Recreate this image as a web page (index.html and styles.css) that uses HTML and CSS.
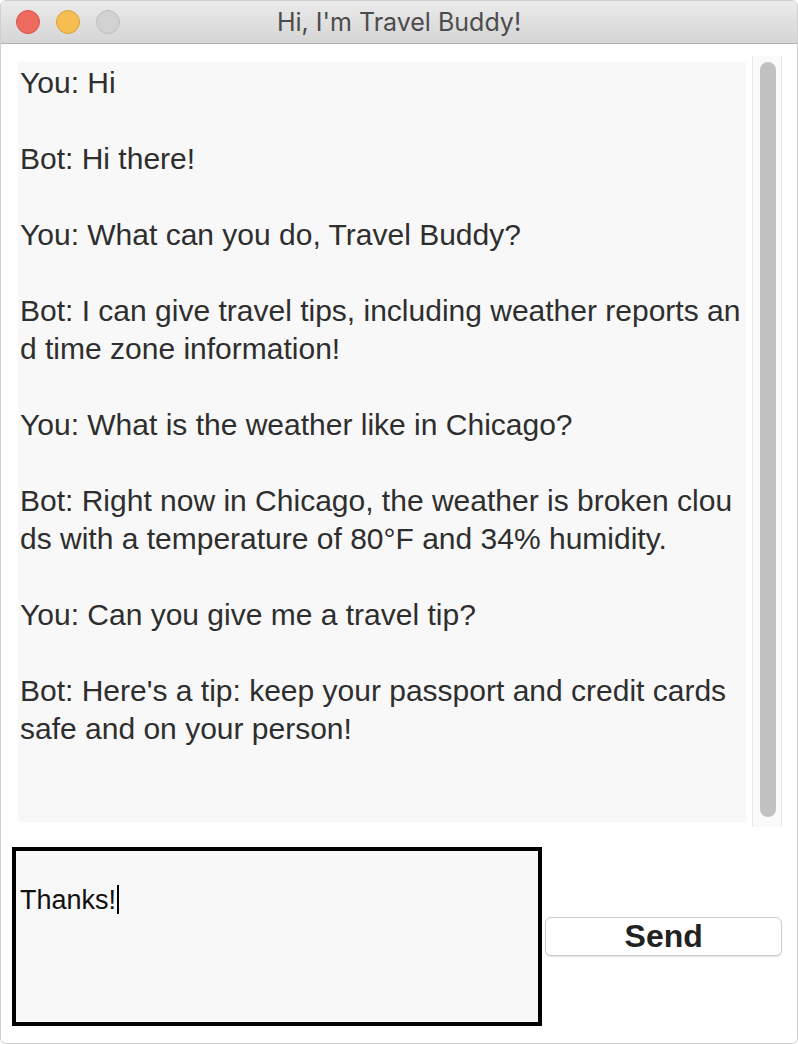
FILE: index.html
```html
<!DOCTYPE html>
<html>
<head>
<meta charset="utf-8">
<link rel="stylesheet" href="styles.css">
</head>
<body>
<div class="window">
  <div class="titlebar">
    <div class="lights">
      <span class="light red"></span>
      <span class="light yellow"></span>
      <span class="light gray"></span>
    </div>
    <div class="title">Hi, I'm Travel Buddy!</div>
  </div>
  <div class="content">
    <div class="chat-row">
      <div class="chat">
        <div class="line">You: Hi</div>
        <div class="line"></div>
        <div class="line">Bot: Hi there!</div>
        <div class="line"></div>
        <div class="line">You: What can you do, Travel Buddy?</div>
        <div class="line"></div>
        <div class="line">Bot: I can give travel tips, including weather reports an</div>
        <div class="line">d time zone information!</div>
        <div class="line"></div>
        <div class="line">You: What is the weather like in Chicago?</div>
        <div class="line"></div>
        <div class="line">Bot: Right now in Chicago, the weather is broken clou</div>
        <div class="line">ds with a temperature of 80°F and 34% humidity.</div>
        <div class="line"></div>
        <div class="line">You: Can you give me a travel tip?</div>
        <div class="line"></div>
        <div class="line">Bot: Here's a tip: keep your passport and credit cards</div>
        <div class="line">safe and on your person!</div>
      </div>
      <div class="scrollbar"><div class="thumb"></div></div>
    </div>
    <div class="input-row">
      <div class="input"><span class="typed">Thanks!</span><span class="caret"></span></div>
      <button class="send">Send</button>
    </div>
  </div>
</div>
</body>
</html>
```
FILE: styles.css
```css
* { box-sizing: border-box; }
html, body { margin: 0; padding: 0; background: #ffffff; }
.window {
  width: 798px;
  height: 1044px;
  border: 1px solid #cfcfcf;
  border-radius: 6px;
  overflow: hidden;
  background: #ffffff;
  display: flex;
  flex-direction: column;
}
.titlebar {
  height: 43px;
  flex: none;
  background: linear-gradient(#ebebeb, #d5d5d5);
  border-bottom: 1px solid #b1b1b1;
  display: flex;
  align-items: center;
  position: relative;
}
.lights {
  display: flex;
  gap: 16px;
  padding-left: 15px;
}
.light {
  width: 24px;
  height: 24px;
  border-radius: 50%;
  display: block;
}
.red { background: #ee6a5f; border: 1px solid #d9544b; }
.yellow { background: #f6be50; border: 1px solid #d9a13c; }
.gray { background: #d2d2d2; border: 1px solid #bdbdbd; }
.title {
  position: absolute;
  left: 0;
  right: 0;
  top: 0;
  bottom: 0;
  display: flex;
  align-items: center;
  justify-content: center;
  font-family: Inter, "Liberation Sans", sans-serif;
  font-size: 25px;
  color: #4c4c4c;
}
.content {
  flex: 1;
  display: flex;
  flex-direction: column;
}
.chat-row {
  display: flex;
  padding: 12px 15px 0 17px;
  height: 784px;
}
.chat {
  width: 728px;
  margin-top: 6px;
  height: 760px;
  background: #f8f8f8;
  padding: 2px 0 0 2px;
  font-family: "Liberation Sans", Arial, sans-serif;
  font-size: 30px;
  line-height: 38px;
  color: #2e2e2e;
}
.line { height: 38px; white-space: nowrap; }
.scrollbar {
  margin-left: 6px;
  width: 30px;
  height: 771px;
  background: #fafafa;
  border-left: 1px solid #e6e6e6;
  border-right: 1px solid #e6e6e6;
  padding: 6px 6px 0 7px;
}
.thumb {
  width: 16px;
  height: 755px;
  border-radius: 8px;
  background: #c1c1c1;
}
.input-row {
  display: flex;
  align-items: center;
  padding: 19px 15px 0 11px;
  gap: 3px;
}
.input {
  width: 531px;
  height: 179px;
  border: 4px solid #000000;
  background: #f8f8f8;
  padding: 33px 0 0 4px;
  font-family: "Liberation Sans", Arial, sans-serif;
  font-size: 27px;
  line-height: 32px;
  color: #111111;
  display: flex;
  align-items: flex-start;
}
.caret {
  display: inline-block;
  width: 2px;
  height: 29px;
  background: #000;
  margin-left: 1px;
  margin-top: 1px;
}
.send {
  width: 237px;
  height: 39px;
  background: #ffffff;
  border: 1px solid #cdcdcd;
  border-radius: 6px;
  box-shadow: 0 1px 1px rgba(0,0,0,0.12);
  font-family: "Liberation Sans", Arial, sans-serif;
  font-weight: bold;
  font-size: 32px;
  color: #222222;
  padding: 0;
  line-height: 37px;
}
```
